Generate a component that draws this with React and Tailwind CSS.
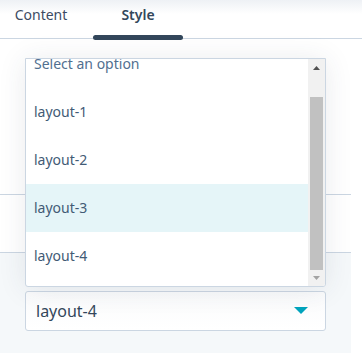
const options = ["Select an option", "layout-1", "layout-2", "layout-3", "layout-4"];

const App = () => {
  const highlighted = "layout-3";

  return (
    <div
      className="relative w-[362px] h-[353px] overflow-hidden bg-white text-[#33475b]"
      style={{ fontFamily: '"Noto Sans", sans-serif' }}
    >
      {/* top fade from header above */}
      <div className="absolute inset-x-0 top-0 h-[14px] bg-gradient-to-b from-[#eef1f5] to-white" />

      {/* Tabs */}
      <div className="relative flex h-[39px] border-b border-[#cbd6e2] text-sm">
        <div className="flex w-[93px] justify-center pl-[4px] pt-[5px] text-[#3d4b63]">
          <span className="mr-[15px]">Content</span>
        </div>
        <div className="relative flex w-[90px] justify-center pt-[5px] font-semibold text-[#33475b]">
          Style
          <span className="absolute left-0 right-0 bottom-[-2px] h-[5px] rounded-full bg-[#33475b]" />
        </div>
      </div>

      {/* Panel content */}
      <div className="flex w-[351px] flex-col">
        <div className="h-[156px] border-b border-[#cbd6e2]" />
        <div className="h-[58px] border-b border-[#cbd6e2]" />
        <div className="h-[100px] bg-[#f5f8fa] px-[25px] pt-[38px]">
          <div className="flex h-[40px] items-center justify-between rounded-[3px] border border-[#cbd6e2] bg-gradient-to-b from-[#fafbfc] to-white pl-[10px] pr-[16px]">
            <span className="text-base text-[#33475b]">layout-4</span>
            <svg width="16" height="8" viewBox="0 0 16 8">
              <path d="M1 0 L15 0 L8 7 Z" fill="#00a4bd" />
            </svg>
          </div>
        </div>
      </div>

      {/* Open dropdown list */}
      <div className="absolute left-[25px] top-[58px] flex h-[229px] w-[301px] overflow-hidden rounded-b-[3px] border border-[#cbd6e2] bg-white shadow-[0_2px_28px_rgba(45,62,80,0.10)]">
        <div className="flex-1 overflow-hidden">
          <div className="mt-[-19px] flex flex-col">
            {options.map((o) => (
              <div
                key={o}
                className={`flex h-[48px] items-center px-[8px] text-sm ${
                  o === highlighted ? "bg-[#e5f5f8]" : ""
                } ${o === "Select an option" ? "text-[#516f90]" : "text-[#425b76]"}`}
              >
                {o}
              </div>
            ))}
          </div>
        </div>
        {/* scrollbar */}
        <div className="flex w-[17px] flex-col items-center bg-[#f1f1f1]">
          <div className="flex h-[17px] items-center justify-center">
            <svg width="7" height="4" viewBox="0 0 7 4">
              <path d="M0 4 L3.5 0 L7 4 Z" fill="#505050" />
            </svg>
          </div>
          <div className="mt-[21px] h-[173px] w-[13px] bg-[#c1c1c1]" />
          <div className="flex flex-1 items-center justify-center">
            <svg width="7" height="4" viewBox="0 0 7 4">
              <path d="M0 0 L7 0 L3.5 4 Z" fill="#a3a3a3" />
            </svg>
          </div>
        </div>
      </div>
    </div>
  );
};

export default App;
